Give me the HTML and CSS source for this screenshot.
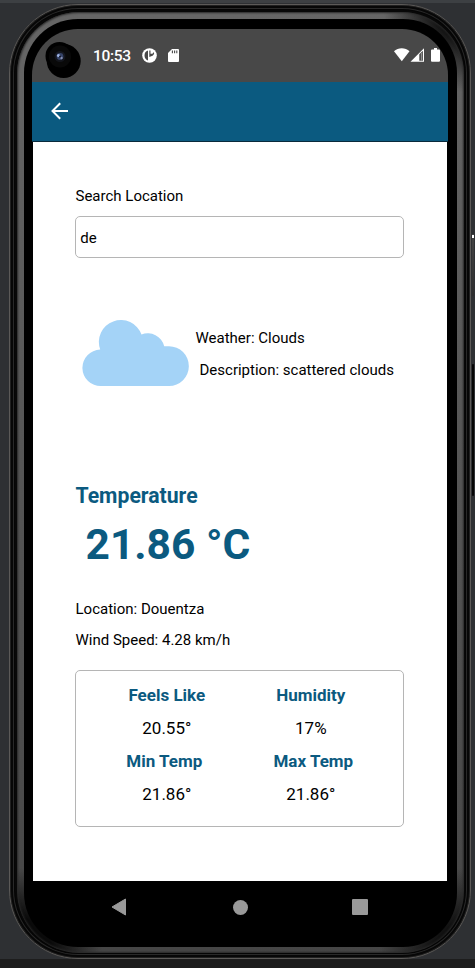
FILE: index.html
```html
<!DOCTYPE html>
<html lang="en">
<head>
<meta charset="utf-8">
<title>Weather</title>
<link rel="stylesheet" href="styles.css">
</head>
<body>
<div class="desk">
  <i class="power-glint"></i><i class="power-button"></i><i class="volume-button"></i>
  <div class="phone"><div class="rim"><div class="bezel"><div class="display">
    <header class="status">
      <svg class="camera" width="36" height="38" viewBox="0 0 36 38">
        <circle cx="18.700" cy="20" r="17" fill="#000"/><circle cx="14.500" cy="15" r="14" fill="#000"/>
        <circle cx="15" cy="15.500" r="11" fill="#090909"/><circle cx="15" cy="15.500" r="5.500" fill="#14161d"/>
        <circle cx="15" cy="15.500" r="3.400" fill="#354368"/><circle cx="13.500" cy="14.500" r="1.600" fill="#9eb4e4"/><circle cx="16.500" cy="17" r="1.200" fill="#8790b4"/><circle cx="15" cy="15.500" r="1" fill="#121724"/>
      </svg>
      <span class="clock">10:53</span>
      <svg class="app-icon" width="15" height="15" viewBox="0 0 15 15"><circle cx="7.500" cy="7.500" r="7.300" fill="#fff"/><path d="M6 2.500v9.900A5.200 5.200 0 0 1 2.500 7.500 5.200 5.200 0 0 1 6 2.500z" fill="#484848"/><path d="M7.300 2.600h1.200v3.200h1.900l1.600-1.800c.6 2-.8 4-2.800 4.300L7.300 9z" fill="#484848"/></svg>
      <svg class="sd-icon" width="11" height="13" viewBox="0 0 11 13"><path d="M4 0h6q1 0 1 1v11q0 1-1 1H1q-1 0-1-1V4z" fill="#fff"/><path d="M4.400 1.500v2.700M6.600 1.500v2.700M8.800 1.500v2.700" stroke="#484848" stroke-width="1.100"/></svg>
      <svg class="signals" width="47" height="14" viewBox="0 0 47 14">
        <path d="M0 3.200C4-.7 11.500-.7 15.500 3.200L7.800 13.200z" fill="#fff"/>
        <path d="M16.500 13.700L30 .2v13.500z" fill="#fff"/><path d="M25.300 12.700V6.200L28.900 2.700v10z" fill="#484848"/><path d="M27.400 5v7.700" stroke="#aaa" stroke-width=".8"/>
        <path d="M40 0h3v1.600h2q1 0 1 1v10.100q0 1-1 1h-7q-1 0-1-1V2.600q0-1 1-1h2z" fill="#fff"/>
      </svg>
    </header>
    <nav class="appbar"><svg width="18" height="18" viewBox="0 0 18 18"><path d="M17 9H1.500M9.200 1.200L1.500 9l7.700 7.800" fill="none" stroke="#fff" stroke-width="2"/></svg></nav>
    <main class="content">
      <label class="search-label" for="q">Search Location</label>
      <input class="search" id="q" value="de">
      <section class="weather">
        <svg width="107" height="67" viewBox="0 0 107 67"><path d="M19 66A18.200 18.200 0 0 1 18.200 29.600A21.300 21.300 0 0 1 59.500 14.500A17 17 0 0 1 82.200 26.300H87A19.800 19.800 0 0 1 87 66z" fill="#a4d3f7"/></svg>
        <div class="summary"><p>Weather: Clouds</p><p class="desc">Description: scattered clouds</p></div>
      </section>
      <h2>Temperature</h2>
      <div class="degrees">21.86 °C</div>
      <p class="place">Location: Douentza</p>
      <p class="wind">Wind Speed: 4.28 km/h</p>
      <section class="details">
        <dl><dt>Feels Like</dt><dd>20.55°</dd><dt class="min">Min Temp</dt><dd>21.86°</dd></dl>
        <dl><dt>Humidity</dt><dd>17%</dd><dt class="max">Max Temp</dt><dd>21.86°</dd></dl>
      </section>
    </main>
    <footer class="softkeys">
      <svg width="16" height="18" viewBox="0 0 16 18"><path d="M14.500 1v16L1 9z" fill="#999" stroke="#999" stroke-linejoin="round"/></svg>
      <i class="home"></i><i class="recent"></i>
    </footer>
  </div></div></div></div>
</div>
</body>
</html>
```
FILE: styles.css
```css
* { box-sizing: border-box; margin: 0; }
body { font-family: Roboto, "Liberation Sans", sans-serif; color: #000; }
.desk { position: relative; height: 968px; overflow: hidden; padding: 4px 4px 9px 9px; background: linear-gradient(#3d4043 0 3px, #2e3033 3px 959px, #1d1d1d 959px); }
.phone { height: 955px; border-radius: 69px; padding: 7px 6px 6px 7px; border: 1px solid #5c5a58; background: #080808; box-shadow: inset 0 0 0 1px #202020, inset 0 0 0 3px #070707, inset 0 0 0 4px #292929, inset 0 0 0 5px #050505; }
.rim { height: 941px; border-radius: 62px; padding: 7px; background: radial-gradient(circle at 0 100%, #0a0a0a 35px, transparent 85px), radial-gradient(circle at 100% 100%, #111 30px, transparent 85px), radial-gradient(circle at 100% 0, #141414 28px, transparent 80px), linear-gradient(#666, #555 50%, #464646); box-shadow: inset 0 0 2px 1px #292929; }
.bezel { height: 928px; border-radius: 54px; padding: 10px 9px 0 8px; background: #000; }
.display { border-radius: 46px 46px 0 0; overflow: hidden; }
.status { position: relative; height: 53px; background: #484848; }
.camera { position: absolute; left: 13px; top: 12px; }
.clock { position: absolute; left: 61px; top: 17px; font-size: 15.5px; letter-spacing: -.3px; line-height: 20px; font-weight: 500; color: #fff; }
.app-icon { position: absolute; left: 110px; top: 19px; }
.sd-icon { position: absolute; left: 136px; top: 20px; }
.signals { position: absolute; left: 362px; top: 19px; }
.appbar { height: 60px; padding: 20px 19px; background: #0b5a80; border-bottom: 1px solid #092a3c; }
.content { height: 739px; margin: 0 1px; padding: 44px 42px 0 42.5px; background: #fff; font-size: 15px; line-height: 20px; }
.search-label { display: block; height: 30px; }
.search { display: block; width: 329px; height: 42px; margin-left: -.2px; padding: 2px 4px 0; border: 1px solid #b5b5b5; border-radius: 5px; font: inherit; background: #fff; }
.weather { display: flex; height: 108px; margin-top: 62px; padding-left: 6px; }
.weather svg { flex: none; }
.summary { padding: 8px 0 0 7px; white-space: nowrap; }
.desc { margin: 12px 0 0 4px; }
h2 { margin-top: 54px; font-size: 21.2px; line-height: 28px; font-weight: 700; color: #0b5a80; }
.degrees { margin-top: 7px; padding-left: 10px; font-size: 42.5px; line-height: 56px; font-weight: 700; color: #0b5a80; }
.place { margin-top: 26px; }
.wind { margin-top: 11px; }
.details { display: grid; grid-template-columns: 144px 144px; justify-content: center; width: 329px; height: 157px; margin: 20px 0 0 -.2px; padding: 7.6px 2px 0 0; border: 1px solid #b5b5b5; border-radius: 5px; font-size: 17px; line-height: 33.3px; text-align: center; white-space: nowrap; }
dt { font-weight: 700; font-size: 17px; color: #0b5a80; }
dd { margin: 0; }
.min { margin-left: -5px; }
.max { margin-left: 5px; }
.softkeys { display: flex; height: 52px; align-items: center; padding-left: 79px; }
.home { width: 15px; height: 15px; margin-left: 106px; border-radius: 50%; background: #999; }
.recent { width: 16px; height: 16px; margin-left: 104px; border-radius: 1px; background: #999; }
.power-glint, .power-button, .volume-button { position: absolute; left: 472px; width: 2px; }
.power-glint { z-index: 1; top: 235px; height: 3px; background: #fff; }
.power-button { top: 234px; height: 62px; background: linear-gradient(#444, #2d2d2d); }
.volume-button { top: 364px; height: 132px; border-radius: 1px; background: #050505; }
```
